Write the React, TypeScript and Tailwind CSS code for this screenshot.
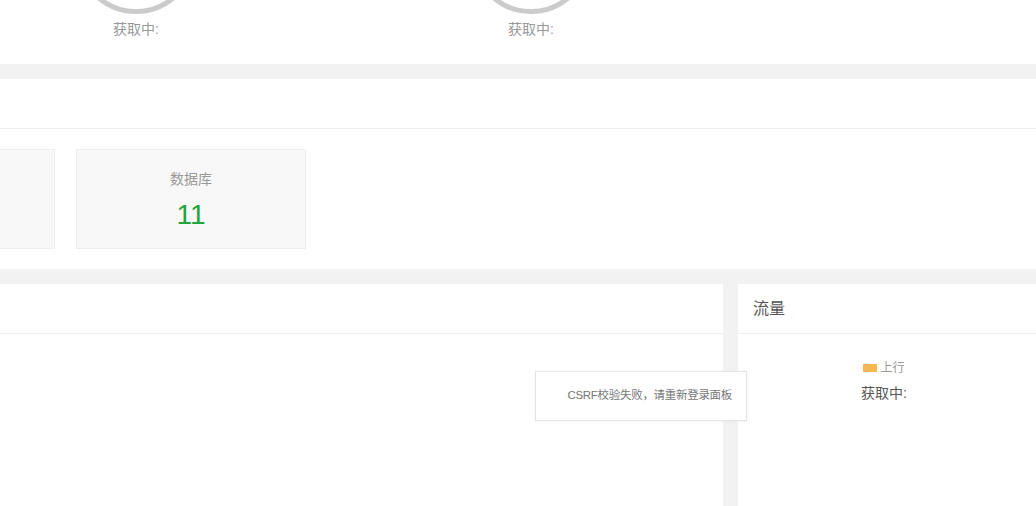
type Gauge = { label: string }

const gauges: Gauge[] = [{ label: "获取中:" }, { label: "获取中:" }]

function Circle({ label }: Gauge) {
  return (
    <div className="flex flex-col items-center">
      <div className="h-[120px] w-[120px] rounded-full border-[5px] border-[#cbcbcb]" />
      <span className="mt-[5px] text-[14px] leading-[20px] text-[#999]">{label}</span>
    </div>
  )
}

function StatCard({ title, value }: { title?: string; value?: string }) {
  return (
    <div className="flex h-[100px] w-[230px] shrink-0 flex-col items-center border border-[#eee] bg-[#f8f8f8] pt-[19px]">
      {title && <span className="text-[14px] leading-[20px] text-[#999]">{title}</span>}
      {value && <span className="mt-[8px] text-[28px] leading-[36px] text-[#20a53a]">{value}</span>}
    </div>
  )
}

export default function App() {
  return (
    <div
      className="relative h-[506px] w-[1036px] overflow-hidden bg-[#f2f2f2]"
      style={{ fontFamily: '"Liberation Sans", "Noto Sans CJK SC", sans-serif' }}
    >
      <div className="-mt-[106px] flex flex-col">
        {/* load gauges */}
        <section className="flex gap-[275px] bg-white pb-[25px] pl-[76px]">
          {gauges.map((g, i) => (
            <Circle key={i} label={g.label} />
          ))}
        </section>

        {/* overview */}
        <section className="mt-[15px] bg-white">
          <div className="h-[50px] border-b border-[#eee]" />
          <div className="-ml-[175px] flex gap-[21px] py-[20px]">
            <StatCard />
            <StatCard title="数据库" value="11" />
          </div>
        </section>

        {/* bottom panels */}
        <div className="mt-[15px] flex h-[300px] gap-[15px]">
          <section className="w-[723px] shrink-0 bg-white">
            <div className="h-[50px] border-b border-[#eee]" />
          </section>
          <section className="flex-1 bg-white">
            <div className="flex h-[50px] items-center border-b border-[#eee] pl-[15px] text-[16px] text-[#555]">
              流量
            </div>
            <div className="flex flex-col items-center pr-[6px] pt-[26px]">
              <div className="flex items-center text-[12px] leading-[16px] text-[#999]">
                <span className="mr-[3px] inline-block h-[8px] w-[14px] bg-[#f7b851]" />
                上行
              </div>
              <span className="mt-[7px] text-[14px] leading-[20px] text-[#555]">获取中:</span>
            </div>
          </section>
        </div>
      </div>

      {/* toast */}
      <div className="absolute left-[535px] top-[371px] flex h-[50px] w-[212px] items-center justify-end border border-[#e4e4e4] bg-white pr-[14px] text-[11.5px] tracking-[-0.3px] text-[#777] shadow-[0_1px_4px_rgba(0,0,0,0.04)]">
        CSRF校验失败，请重新登录面板
      </div>
    </div>
  )
}
